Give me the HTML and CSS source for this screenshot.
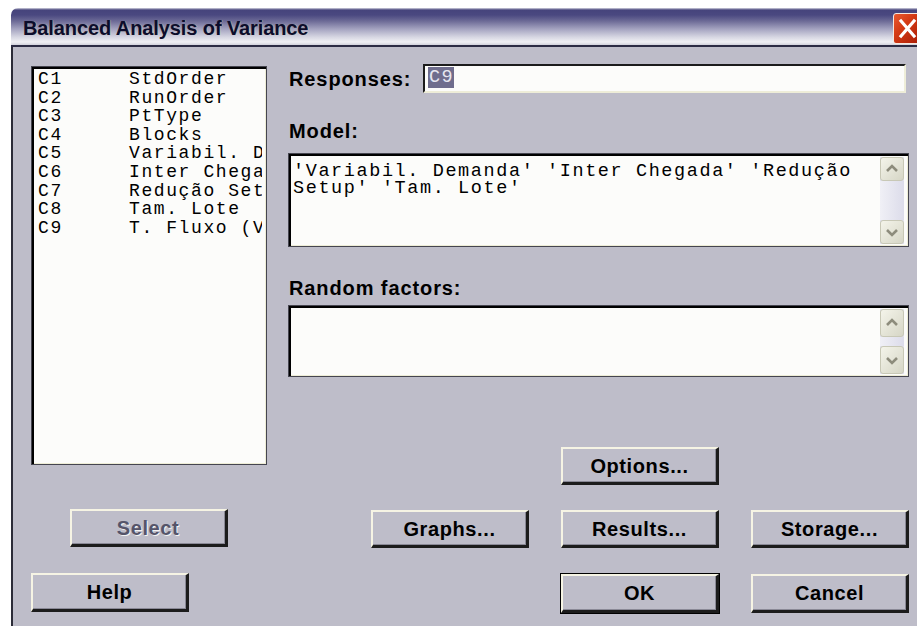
FILE: index.html
```html
<!DOCTYPE html>
<html lang="pt">
<head>
<meta charset="utf-8">
<title>Balanced Analysis of Variance</title>
<link rel="stylesheet" href="styles.css">
</head>
<body>
<div class="window">
  <div class="titlebar">
    <span class="title">Balanced Analysis of Variance</span>
    <span class="close" aria-label="Close">
      <svg width="28" height="31" viewBox="0 0 28 31">
        <path d="M8 8 L21 23 M21 8 L8 23" stroke="#fff" stroke-width="3.2" stroke-linecap="square" fill="none"/>
      </svg>
    </span>
  </div>
  <div class="dialog">
    <div class="columns">
      <div class="left">
        <div class="list sunken">
          <div class="row"><span class="col">C1</span><span>StdOrder</span></div>
          <div class="row"><span class="col">C2</span><span>RunOrder</span></div>
          <div class="row"><span class="col">C3</span><span>PtType</span></div>
          <div class="row"><span class="col">C4</span><span>Blocks</span></div>
          <div class="row"><span class="col">C5</span><span>Variabil. Demanda</span></div>
          <div class="row"><span class="col">C6</span><span>Inter Chegada</span></div>
          <div class="row"><span class="col">C7</span><span>Redução Setup</span></div>
          <div class="row"><span class="col">C8</span><span>Tam. Lote</span></div>
          <div class="row"><span class="col">C9</span><span>T. Fluxo (Valor)</span></div>
        </div>
        <button class="btn btn-select" disabled>Select</button>
        <button class="btn btn-help">Help</button>
      </div>

      <div class="right">
        <div class="field-row">
          <span class="label">Responses:</span>
          <div class="input"><span class="sel">C9</span></div>
        </div>

        <div class="label label-model">Model:</div>
        <div class="textbox sunken model">
          <div class="text"><div>'Variabil. Demanda' 'Inter Chegada' 'Redução</div><div>Setup' 'Tam. Lote'</div></div>
          <div class="scroll">
            <span class="sbtn"><svg width="22" height="22" viewBox="0 0 22 22"><polyline points="6,13 11,8 16,13" fill="none" stroke="#8d8c7c" stroke-width="2.6"/></svg></span>
            <span class="track"></span>
            <span class="sbtn"><svg width="22" height="22" viewBox="0 0 22 22"><polyline points="6,9 11,14 16,9" fill="none" stroke="#8d8c7c" stroke-width="2.6"/></svg></span>
          </div>
        </div>

        <div class="label label-random">Random factors:</div>
        <div class="textbox sunken random">
          <div class="text"></div>
          <div class="scroll">
            <span class="sbtn"><svg width="22" height="22" viewBox="0 0 22 22"><polyline points="6,13 11,8 16,13" fill="none" stroke="#8d8c7c" stroke-width="2.6"/></svg></span>
            <span class="track"></span>
            <span class="sbtn"><svg width="22" height="22" viewBox="0 0 22 22"><polyline points="6,9 11,14 16,9" fill="none" stroke="#8d8c7c" stroke-width="2.6"/></svg></span>
          </div>
        </div>

        <div class="btn-row row-options">
          <button class="btn">Options...</button>
        </div>
        <div class="btn-row row-sub">
          <button class="btn">Graphs...</button>
          <button class="btn">Results...</button>
          <button class="btn">Storage...</button>
        </div>
        <div class="btn-row row-ok">
          <button class="btn btn-ok">OK</button>
          <button class="btn">Cancel</button>
        </div>
      </div>
    </div>
  </div>
</div>
</body>
</html>
```

FILE: styles.css
```css
html, body {
  margin: 0;
  padding: 0;
  background: #ffffff;
  overflow: hidden;
}

body {
  width: 917px;
  height: 626px;
}

.window {
  margin: 8px 0 0 11px;
  width: 914px;
  height: 630px;
  display: flex;
  flex-direction: column;
  font-family: "Liberation Sans", Arial, sans-serif;
}

/* title bar */
.titlebar {
  position: relative;
  height: 39px;
  flex: none;
  display: flex;
  align-items: center;
  padding-left: 12px;
  border-radius: 7px 0 0 0;
  background: linear-gradient(to bottom,
    #d4d4e0 0px, #46447c 2px, #4a4880 7px, #6c6a96 13px,
    #a4a3c0 21px, #d6d6e2 29px, #f0f0f4 34px, #d2d2dc 37px,
    #2c2c44 37px, #2c2c44 39px);
}

.title {
  font-weight: bold;
  font-size: 20px;
  color: #0c0c2c;
  letter-spacing: -0.1px;
  text-shadow: 1px 0 0 rgba(230, 220, 120, 0.35);
  margin-top: 1px;
}

.close {
  position: absolute;
  left: 882px;
  top: 5px;
  width: 28px;
  height: 31px;
  box-sizing: border-box;
  border: 1px solid #f4e8e0;
  border-radius: 3px;
  background: linear-gradient(135deg, #ea5a30 0%, #d43a14 40%, #a81c06 100%);
  display: flex;
}

.close svg {
  display: block;
  margin: -1px;
}

/* dialog surface */
.dialog {
  flex: 1;
  background: #bebdc9;
  border-left: 2px solid #2c2c38;
  padding: 17px 0 0 18px;
}

.columns {
  display: flex;
  gap: 21px;
}

.left {
  width: 236px;
  display: flex;
  flex-direction: column;
}

.right {
  width: 621px;
  display: flex;
  flex-direction: column;
}

/* sunken frames */
.sunken {
  box-sizing: border-box;
  border: 1px solid #45454f;
  background: #fcfcfa;
  box-shadow: inset 2px 2px 0 #000000, inset -1px -1px 0 #eeedd6;
}

/* column list */
.list {
  margin-top: 2px;
  height: 399px;
  padding: 3px 0 0 6px;
  overflow: hidden;
  font-family: "Liberation Mono", "Courier New", monospace;
  font-size: 18px;
  letter-spacing: 1.6px;
  line-height: 18.6px;
  color: #000;
}

.row {
  display: flex;
  white-space: nowrap;
  overflow: hidden;
  width: 224px;
}

.row .col {
  width: 91px;
  flex: none;
}

/* text fields */
.field-row {
  display: flex;
  align-items: center;
  height: 29px;
}

.label {
  font-weight: bold;
  font-size: 20px;
  letter-spacing: 0.9px;
  color: #000;
  line-height: 20px;
  padding-left: 1px;
}

.field-row .label {
  width: 134px;
  flex: none;
}

.input {
  flex: none;
  width: 483px;
  height: 29px;
  box-sizing: border-box;
  background: #fcfcfa;
  border-style: solid;
  border-width: 2px;
  border-color: #1c1c1c #eeedd8 #eeedd8 #1c1c1c;
  padding: 1px 0 0 3px;
  font-family: "Liberation Mono", "Courier New", monospace;
  font-size: 18.5px;
  letter-spacing: 1.4px;
  line-height: 21px;
}

.sel {
  display: inline-block;
  background: #6f6d8d;
  color: #e6e6f0;
  padding: 0 0 0 1px;
  line-height: 21px;
}

.label-model {
  margin-top: 28px;
}

.label-random {
  margin-top: 31px;
}

.textbox {
  display: flex;
  padding: 3px 3px 2px 3px;
}

.model {
  margin-top: 12px;
  height: 94px;
}

.random {
  margin-top: 7px;
  height: 72px;
}

.textbox .text {
  flex: 1;
  padding: 6px 0 0 1px;
  font-family: "Liberation Mono", "Courier New", monospace;
  font-size: 18.5px;
  letter-spacing: 1.6px;
  line-height: 17px;
  color: #000;
  white-space: nowrap;
}

/* scroll bar */
.scroll {
  width: 24px;
  flex: none;
  display: flex;
  flex-direction: column;
  background: #e2e2ee;
  margin-right: 1px;
}

.track {
  flex: 1;
  background: linear-gradient(to right, #f0f0f6, #dcdcea);
}

.sbtn {
  height: 24px;
  box-sizing: border-box;
  border: 1px solid #c8c8b6;
  border-radius: 3px;
  background: linear-gradient(to bottom right, #f4f4ea, #d6d6c6);
  display: flex;
  align-items: center;
  justify-content: center;
}

.random .sbtn {
  height: 28px;
}

/* buttons */
.btn {
  width: 158px;
  height: 38px;
  box-sizing: border-box;
  margin: 0;
  padding: 0;
  background: #bebdc9;
  border-style: solid;
  border-width: 2px 3px 3px 2px;
  border-color: #f6f4e4 #1c1c1c #1c1c1c #f6f4e4;
  box-shadow: inset -1px -1px 0 #8a8996;
  font-family: "Liberation Sans", Arial, sans-serif;
  font-weight: bold;
  font-size: 20px;
  letter-spacing: 0.6px;
  color: #000;
  line-height: 20px;
}

.btn-select {
  align-self: center;
  margin-top: 44px;
  margin-left: -1px;
  color: #55546a;
  text-shadow: 1px 1px 0 #f4f4f4;
}

.btn-help {
  margin-top: 26px;
  height: 39px;
}

.btn-row {
  display: flex;
  gap: 32px;
}

.row-options {
  margin-top: 70px;
  padding-left: 273px;
}

.row-sub {
  margin-top: 25px;
  padding-left: 83px;
}

.row-ok {
  margin-top: 26px;
  padding-left: 273px;
}

.row-ok .btn {
  height: 39px;
}

.btn-ok {
  outline: 1px solid #000;
}
```
